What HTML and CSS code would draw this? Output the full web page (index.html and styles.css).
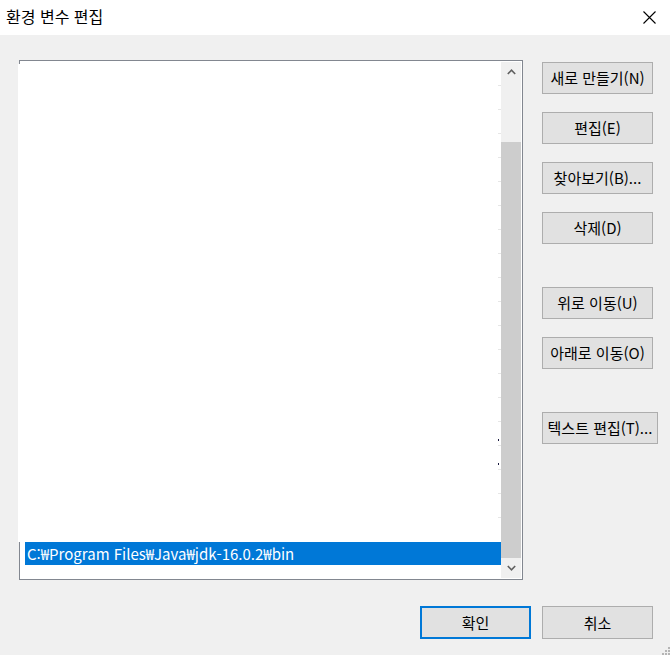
FILE: index.html
```html
<!DOCTYPE html>
<html lang="ko">
<head>
<meta charset="utf-8">
<title>환경 변수 편집</title>
<link rel="stylesheet" href="styles.css">
</head>
<body>
<div class="window">
  <div class="titlebar">
    <span class="title">환경 변수 편집</span>
    <svg class="close" width="13" height="13" viewBox="0 0 13 13"><path d="M0.5 0.5 L12.5 12.5 M12.5 0.5 L0.5 12.5" stroke="#000" stroke-width="1.1" fill="none"/></svg>
  </div>
  <div class="main">
    <div class="listbox">
      <div class="list">
        <div class="filler">
          <span class="dot dot1"></span>
          <span class="dot dot2"></span>
        </div>
        <div class="item selected">C:₩Program Files₩Java₩jdk-16.0.2₩bin</div>
        <div class="tail"></div>
      </div>
      <div class="scrollbar">
        <div class="arrow">
          <svg width="9" height="6" viewBox="0 0 9 6"><path d="M0.8 5 L4.5 1.2 L8.2 5" stroke="#606060" stroke-width="1.6" fill="none"/></svg>
        </div>
        <div class="track-gap"></div>
        <div class="thumb"></div>
        <div class="arrow">
          <svg width="9" height="6" viewBox="0 0 9 6"><path d="M0.8 1 L4.5 4.8 L8.2 1" stroke="#606060" stroke-width="1.6" fill="none"/></svg>
        </div>
      </div>
    </div>
    <div class="buttons">
      <button class="btn">새로 만들기(N)</button>
      <button class="btn">편집(E)</button>
      <button class="btn">찾아보기(B)...</button>
      <button class="btn">삭제(D)</button>
      <button class="btn group">위로 이동(U)</button>
      <button class="btn">아래로 이동(O)</button>
      <button class="btn group wide">텍스트 편집(T)...</button>
    </div>
  </div>
  <div class="footer">
    <button class="btn primary">확인</button>
    <button class="btn">취소</button>
  </div>
  <svg class="grip" width="8" height="8" viewBox="0 0 8 8">
    <rect x="6" y="0" width="2" height="2" fill="#b5b5b5"/>
    <rect x="3" y="3" width="2" height="2" fill="#b5b5b5"/>
    <rect x="6" y="3" width="2" height="2" fill="#b5b5b5"/>
    <rect x="0" y="6" width="2" height="2" fill="#b5b5b5"/>
    <rect x="3" y="6" width="2" height="2" fill="#b5b5b5"/>
    <rect x="6" y="6" width="2" height="2" fill="#b5b5b5"/>
  </svg>
</div>
</body>
</html>
```
FILE: styles.css
```css
* { box-sizing: border-box; }
html, body { margin: 0; padding: 0; }
body {
  width: 670px;
  height: 655px;
  overflow: hidden;
  background: #f0f0f0;
  font-family: "Noto Sans CJK KR", "Noto Sans", sans-serif;
  color: #000;
}
.window {
  position: relative;
  width: 670px;
  height: 655px;
  display: flex;
  flex-direction: column;
}
.titlebar {
  height: 35px;
  background: #fff;
  display: flex;
  align-items: center;
  justify-content: space-between;
  padding: 0 14px 3px 6px;
}
.title {
  font-size: 16px;
  line-height: 20px;
}
.close { display: block; margin-top: 2px; }
.main {
  display: flex;
  padding: 25px 0 0 19px;
  gap: 19px;
}
.listbox {
  width: 504px;
  height: 520px;
  border: 1px solid #828790;
  background: #fff;
  display: flex;
  padding: 1px 1px 1px 0;
}
.list {
  flex: 1;
  display: flex;
  flex-direction: column;
}
.filler {
  position: relative;
  flex: 1;
  margin: 2px 0 0 -2px;
  background-color: #fff;
  background-image: repeating-linear-gradient(to bottom, transparent 0 23px, #e6e6e6 23px 24px);
  background-size: 3px 100%;
  background-position: right 0 top -2px;
  background-repeat: no-repeat;
}
.dot {
  position: absolute;
  width: 1px;
  height: 2px;
  background: #1a1a40;
  right: 2px;
}
.dot1 { top: 375px; }
.dot2 { top: 399px; }
.item {
  height: 23px;
  margin-left: 5px;
  padding-left: 2px;
  font-size: 15px;
  line-height: 23px;
  white-space: nowrap;
}
.selected {
  background: #0078d7;
  color: #fff;
}
.tail { height: 13px; }
.scrollbar {
  width: 20px;
  background: #f0f0f0;
  display: flex;
  flex-direction: column;
}
.arrow {
  height: 20px;
  display: flex;
  align-items: center;
  justify-content: center;
}
.arrow svg { display: block; }
.track-gap { height: 60px; }
.thumb {
  flex: 1;
  background: #cdcdcd;
}
.buttons {
  display: flex;
  flex-direction: column;
  align-items: flex-start;
  gap: 18px;
  padding-top: 2px;
}
.btn {
  width: 111px;
  height: 32px;
  padding: 0;
  border: 1px solid #adadad;
  background: #e1e1e1;
  font-family: "Noto Sans CJK KR", "Noto Sans", sans-serif;
  font-size: 15px;
  color: #000;
  white-space: nowrap;
  line-height: 30px;
}
.btn.group { margin-top: 25px; }
.btn.wide { width: 116px; }
.footer {
  display: flex;
  justify-content: flex-end;
  gap: 11px;
  padding: 26px 17px 0 0;
}
.footer .btn { width: 111px; height: 33px; }
.btn.primary {
  border: 2px solid #0078d7;
}
.grip {
  position: absolute;
  right: 0;
  bottom: 0;
}
```
